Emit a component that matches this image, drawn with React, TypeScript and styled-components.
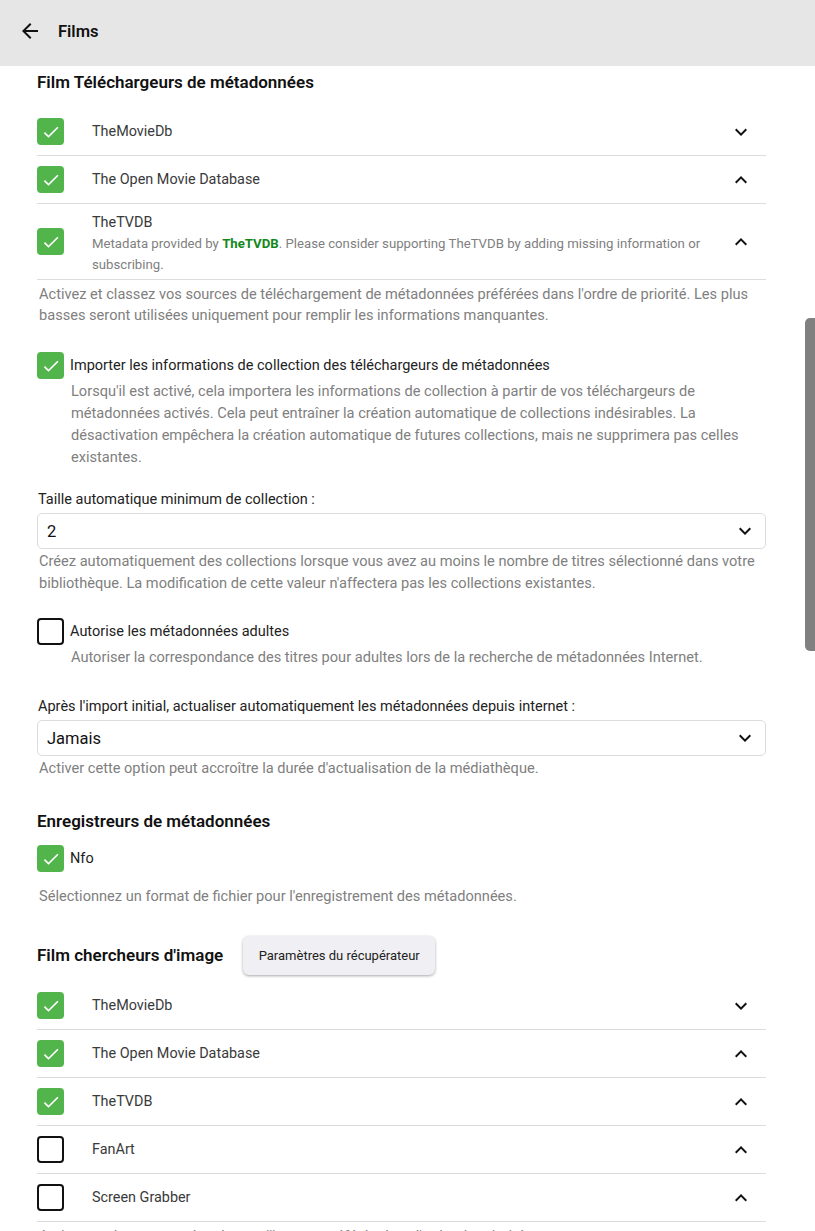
import styled, { createGlobalStyle } from "styled-components";

const GlobalStyle = createGlobalStyle`
  html, body {
    margin: 0;
    padding: 0;
    background: #fff;
    font-family: Roboto, "Liberation Sans", sans-serif;
    color: #222;
    overflow: hidden;
  }
`;

type Fetcher = {
  name: string;
  checked: boolean;
  open: boolean;
  note?: boolean;
};

const metadataFetchers: Fetcher[] = [
  { name: 'TheMovieDb', checked: true, open: false },
  { name: 'The Open Movie Database', checked: true, open: true },
  { name: 'TheTVDB', checked: true, open: true, note: true },
];

const imageFetchers: Fetcher[] = [
  { name: 'TheMovieDb', checked: true, open: false },
  { name: 'The Open Movie Database', checked: true, open: true },
  { name: 'TheTVDB', checked: true, open: true },
  { name: 'FanArt', checked: false, open: true },
  { name: 'Screen Grabber', checked: false, open: true },
];

const ArrowBack = () => (
  <svg width="24" height="24" viewBox="0 0 24 24" fill="#111">
    <path d="M20 11H7.83l5.59-5.59L12 4l-8 8 8 8 1.41-1.41L7.83 13H20v-2z" />
  </svg>
);

const Chevron = ({ up }: { up?: boolean }) => (
  <svg width="24" height="24" viewBox="0 0 24 24" fill="#111">
    {up ? (
      <path d="M12 8l-6 6 1.41 1.41L12 10.83l4.59 4.58L18 14z" />
    ) : (
      <path d="M16.59 8.59L12 13.17 7.41 8.59 6 10l6 6 6-6z" />
    )}
  </svg>
);

const Checkbox = ({ checked }: { checked: boolean }) => (
  <Box $checked={checked}>
    {checked && (
      <svg width="20" height="20" viewBox="0 0 24 24" fill="#fff">
        <path d="M9 16.17L4.83 12l-1.42 1.41L9 19 21 7l-1.41-1.41z" />
      </svg>
    )}
  </Box>
);

const FetcherList = ({ items, top }: { items: Fetcher[]; top?: number }) => (
  <List $top={top}>
    {items.map((item, i) => (
      <Row key={i} $tall={!!item.note}>
        <Checkbox checked={item.checked} />
        <RowText $tall={!!item.note}>
          <RowName>{item.name}</RowName>
          {item.note && (
            <RowNote>
              Metadata provided by <Brand>TheTVDB</Brand>. Please consider supporting TheTVDB by adding missing information or subscribing.
            </RowNote>
          )}
        </RowText>
        <Chevron up={item.open} />
      </Row>
    ))}
  </List>
);

const App = () => {
  return (
    <>
      <GlobalStyle />
      <Header>
        <ArrowBack />
        <HeaderTitle>Films</HeaderTitle>
      </Header>
      <Content>
        <SectionTitle>Film Téléchargeurs de métadonnées</SectionTitle>
        <FetcherList items={metadataFetchers} />
        <FieldHint $top={4}>
          Activez et classez vos sources de téléchargement de métadonnées préférées dans l'ordre de priorité. Les plus basses seront utilisées uniquement pour remplir les informations manquantes.
        </FieldHint>

        <CheckField $top={26}>
          <Checkbox checked={true} />
          <CheckLabel>Importer les informations de collection des téléchargeurs de métadonnées</CheckLabel>
        </CheckField>
        <CheckHint>
          Lorsqu'il est activé, cela importera les informations de collection à partir de vos téléchargeurs de métadonnées activés. Cela peut entraîner la création automatique de collections indésirables. La désactivation empêchera la création automatique de futures collections, mais ne supprimera pas celles existantes.
        </CheckHint>

        <SelectField>
          <FieldLabel>Taille automatique minimum de collection :</FieldLabel>
          <Select>
            <span>2</span>
            <Chevron />
          </Select>
          <FieldHint $lh={22} $top={1}>
            Créez automatiquement des collections lorsque vous avez au moins le nombre de titres sélectionné dans votre bibliothèque. La modification de cette valeur n'affectera pas les collections existantes.
          </FieldHint>
        </SelectField>

        <CheckField $top={24}>
          <Checkbox checked={false} />
          <CheckLabel>Autorise les métadonnées adultes</CheckLabel>
        </CheckField>
        <CheckHint>
          Autoriser la correspondance des titres pour adultes lors de la recherche de métadonnées Internet.
        </CheckHint>

        <SelectField $top={30}>
          <FieldLabel>Après l'import initial, actualiser automatiquement les métadonnées depuis internet :</FieldLabel>
          <Select>
            <span>Jamais</span>
            <Chevron />
          </Select>
          <FieldHint $lh={22} $top={1}>
            Activer cette option peut accroître la durée d'actualisation de la médiathèque.
          </FieldHint>
        </SelectField>

        <SectionTitle $top={32}>Enregistreurs de métadonnées</SectionTitle>
        <CheckField $top={14}>
          <Checkbox checked={true} />
          <CheckLabel>Nfo</CheckLabel>
        </CheckField>
        <FieldHint $top={14}>
          Sélectionnez un format de fichier pour l'enregistrement des métadonnées.
        </FieldHint>

        <TitleRow>
          <SectionTitle $top={0}>Film chercheurs d'image</SectionTitle>
          <RaisedButton>Paramètres du récupérateur</RaisedButton>
        </TitleRow>
        <FetcherList items={imageFetchers} top={7} />
        <FieldHint $top={4}>
          Activez et classez vos chercheurs d'images préférés dans l'ordre de priorité.
        </FieldHint>
      </Content>
      <ScrollThumb />
    </>
  );
};

const Header = styled.header`
  height: 66px;
  background: #e6e6e6;
  display: flex;
  align-items: center;
  padding: 0 0 4px 18px;
  box-sizing: border-box;
  gap: 16px;
`;

const HeaderTitle = styled.h1`
  margin: 0;
  font-size: 16.5px;
  font-weight: 600;
  color: #111;
`;

const Content = styled.main`
  width: 729px;
  padding-left: 37px;
`;

const SectionTitle = styled.h2<{ $top?: number }>`
  margin: ${props => props.$top ?? 6}px 0 0;
  font-size: 17px;
  line-height: 20px;
  font-weight: 600;
  color: #111;
`;

const TitleRow = styled.div`
  display: flex;
  align-items: center;
  gap: 20px;
  margin-top: 28px;
`;

const RaisedButton = styled.button`
  height: 39px;
  width: 192px;
  border: 0;
  border-radius: 6px;
  background: #f0f0f4;
  box-shadow: 0 1px 3px rgba(0, 0, 0, 0.35);
  font-family: Roboto, "Liberation Sans", sans-serif;
  font-size: 13px;
  color: #222;
  margin-top: 1px;
`;

const List = styled.div<{ $top?: number }>`
  margin-top: ${props => props.$top ?? 16}px;
`;

const Row = styled.div<{ $tall?: boolean }>`
  display: flex;
  align-items: center;
  min-height: ${props => props.$tall ? 76 : 48}px;
  border-bottom: 1px solid #dcdcdc;
  padding-right: 13px;
  box-sizing: border-box;
`;

const RowText = styled.div<{ $tall?: boolean }>`
  flex: 1;
  padding: ${props => props.$tall ? '4px' : '0'} 20px 0 28px;
`;

const RowName = styled.div`
  font-size: 14.4px;
  line-height: 20px;
  color: #3a3a3a;
`;

const RowNote = styled.div`
  font-size: 13.2px;
  line-height: 21px;
  color: #808080;
`;

const Brand = styled.span`
  color: #11891a;
  font-weight: 700;
`;

const Box = styled.span<{ $checked: boolean }>`
  flex: none;
  width: 27px;
  height: 27px;
  box-sizing: border-box;
  border-radius: 4px;
  display: flex;
  align-items: center;
  justify-content: center;
  background: ${props => props.$checked ? '#52b54b' : '#fff'};
  border: ${props => props.$checked ? '0' : '2px solid #111'};
`;

const FieldHint = styled.div<{ $lh?: number; $top?: number }>`
  margin-top: ${props => props.$top ?? 3}px;
  padding-left: 2px;
  font-size: 14.6px;
  line-height: ${props => props.$lh ?? 21}px;
  color: #808080;
`;

const CheckField = styled.label<{ $top?: number }>`
  display: flex;
  align-items: center;
  gap: 6px;
  margin-top: ${props => props.$top ?? 24}px;
`;

const CheckLabel = styled.span`
  font-size: 14.5px;
  color: #222;
`;

const CheckHint = styled.div`
  padding-left: 34px;
  margin-top: 1px;
  font-size: 14.6px;
  line-height: 22px;
  color: #808080;
`;

const SelectField = styled.div<{ $top?: number }>`
  margin-top: ${props => props.$top ?? 23}px;
`;

const FieldLabel = styled.div`
  font-size: 14.5px;
  line-height: 18px;
  color: #222;
  padding-left: 1px;
`;

const Select = styled.div`
  margin-top: 4px;
  height: 36px;
  border: 1px solid #dcdcdc;
  border-radius: 5px;
  box-sizing: border-box;
  display: flex;
  align-items: center;
  justify-content: space-between;
  padding: 0 8px 0 9px;
  font-size: 16.5px;
  color: #111;
`;

const ScrollThumb = styled.div`
  position: fixed;
  right: 0;
  top: 318px;
  width: 10px;
  height: 333px;
  background: #808080;
  border-radius: 5px 0 0 5px;
`;

export default App;
